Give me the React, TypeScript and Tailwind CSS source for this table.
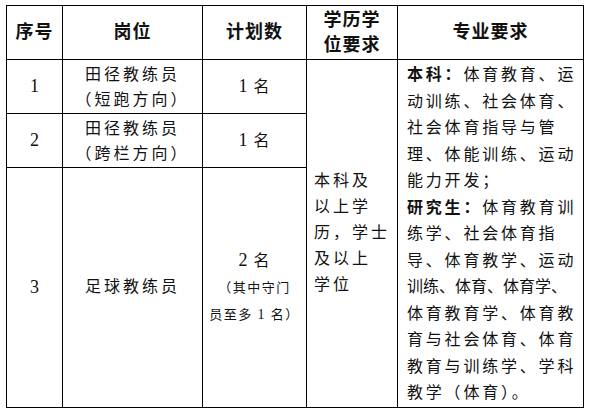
import React from "react";

const cjk = "font-['Liberation_Serif','Noto_Sans_CJK_SC',serif]";

const specLines: { text: React.ReactNode; tight?: boolean }[] = [
  { text: (<><b className="font-bold">本科：</b>体育教育、运</>) },
  { text: "动训练、社会体育、" },
  { text: "社会体育指导与管" },
  { text: "理、体能训练、运动" },
  { text: "能力开发；" },
  { text: (<><b className="font-bold">研究生：</b>体育教育训</>) },
  { text: "练学、社会体育指" },
  { text: "导、体育教学、运动" },
  { text: "训练、体育、体育学、", tight: true },
  { text: "体育教育学、体育教" },
  { text: "育与社会体育、体育" },
  { text: "教育与训练学、学科" },
  { text: "教学（体育）。" },
];

function Count({ n }: { n: string }) {
  return (
    <span>
      <span className="text-[18px] mr-[5px]">{n}</span>名
    </span>
  );
}

export default function App() {
  const cell = "border border-black text-center align-middle p-0";
  const num = `${cell} text-[18px]`;
  return (
    <div className={`w-[589px] h-[412px] bg-white text-[#111] ${cjk}`}>
      <div className="pl-[6px] pt-[5px]">
        <table className="table-fixed border-collapse w-[577px] text-[16px]">
          <colgroup>
            <col className="w-[56px]" />
            <col className="w-[140px]" />
            <col className="w-[104px]" />
            <col className="w-[91px]" />
            <col className="w-[186px]" />
          </colgroup>
          <thead>
            <tr className="h-[54px] text-[18px] font-bold tracking-[1px]">
              <th className={cell}>序号</th>
              <th className={cell}>岗位</th>
              <th className={cell}>计划数</th>
              <th className={`${cell} leading-[25px]`}>
                学历学
                <br />
                位要求
              </th>
              <th className={cell}>专业要求</th>
            </tr>
          </thead>
          <tbody>
            <tr className="h-[54px]">
              <td className={num}>1</td>
              <td className={`${cell} leading-[25px] tracking-[3px]`}>
                田径教练员
                <br />
                （短跑方向）
              </td>
              <td className={`${cell} tracking-[1px]`}>
                <Count n="1" />
              </td>
              <td rowSpan={3} className="border border-black align-middle pl-[7px] leading-[26px] tracking-[3px]">
                本科及
                <br />
                以上学
                <br />
                历，学士
                <br />
                及以上
                <br />
                学位
              </td>
              <td rowSpan={3} className="border border-black align-top pl-[9px] pt-[2px] leading-[26.5px]">
                {specLines.map((l, i) => (
                  <div
                    key={i}
                    className={`whitespace-nowrap ${l.tight ? "tracking-[0px]" : "tracking-[2.8px]"}`}
                  >
                    {l.text}
                  </div>
                ))}
              </td>
            </tr>
            <tr className="h-[54px]">
              <td className={num}>2</td>
              <td className={`${cell} leading-[25px] tracking-[3px]`}>
                田径教练员
                <br />
                （跨栏方向）
              </td>
              <td className={`${cell} tracking-[1px]`}>
                <Count n="1" />
              </td>
            </tr>
            <tr className="h-[239px]">
              <td className={num}>3</td>
              <td className={`${cell} tracking-[3px]`}>足球教练员</td>
              <td className={cell}>
                <div className="leading-[26px] tracking-[1px]">
                  <Count n="2" />
                </div>
                <div className="text-[13px] leading-[27px] tracking-[1.5px]">
                  （其中守门
                  <br />
                  员至多 <span className="text-[14px]">1</span> 名）
                </div>
              </td>
            </tr>
          </tbody>
        </table>
      </div>
    </div>
  );
}
